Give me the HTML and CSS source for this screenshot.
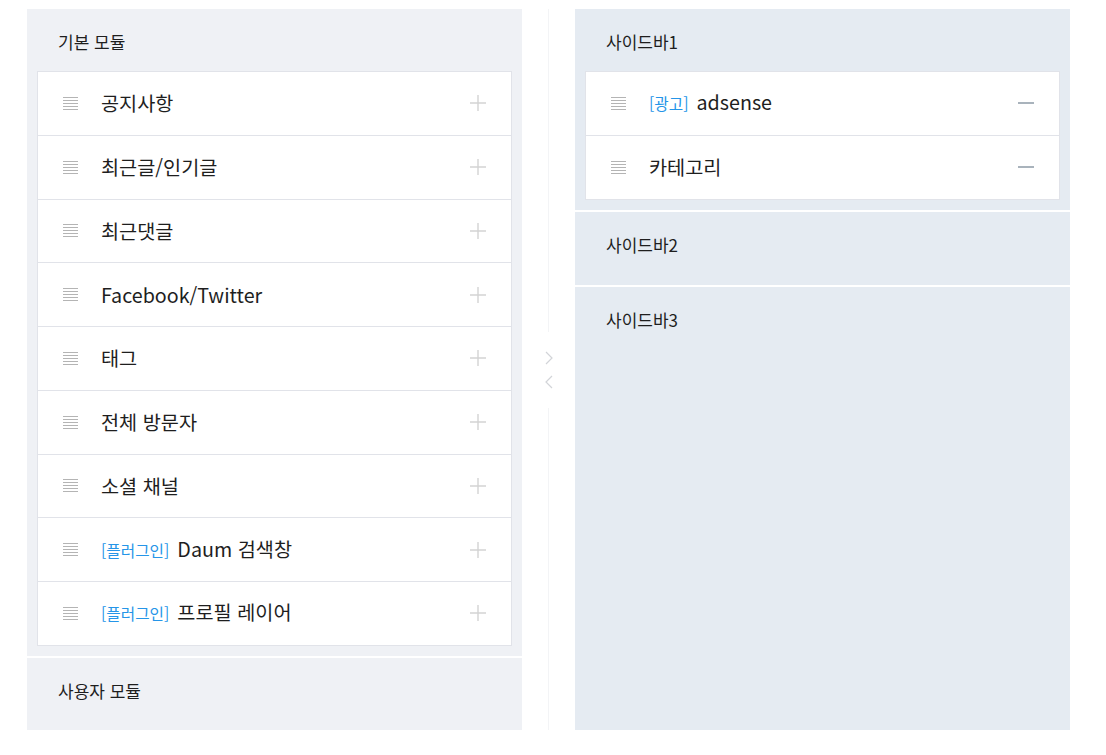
FILE: index.html
```html
<!DOCTYPE html>
<html lang="ko">
<head>
<meta charset="utf-8">
<title>사이드바 관리</title>
<link rel="stylesheet" href="styles.css">
</head>
<body>
<div class="layout">
  <div class="col">
    <section class="group group-left">
      <h2 class="group-title">기본 모듈</h2>
      <ul class="module-list">
        <li class="module"><svg class="drag" viewBox="0 0 15 13"><path d="M0 .5h15M0 3.5h15M0 6.5h15M0 9.5h15M0 12.5h15"/></svg><span class="name">공지사항</span><svg class="act plus" viewBox="0 0 16 16"><path d="M0 8h16M8 0v16"/></svg></li>
        <li class="module"><svg class="drag" viewBox="0 0 15 13"><path d="M0 .5h15M0 3.5h15M0 6.5h15M0 9.5h15M0 12.5h15"/></svg><span class="name">최근글/인기글</span><svg class="act plus" viewBox="0 0 16 16"><path d="M0 8h16M8 0v16"/></svg></li>
        <li class="module"><svg class="drag" viewBox="0 0 15 13"><path d="M0 .5h15M0 3.5h15M0 6.5h15M0 9.5h15M0 12.5h15"/></svg><span class="name">최근댓글</span><svg class="act plus" viewBox="0 0 16 16"><path d="M0 8h16M8 0v16"/></svg></li>
        <li class="module"><svg class="drag" viewBox="0 0 15 13"><path d="M0 .5h15M0 3.5h15M0 6.5h15M0 9.5h15M0 12.5h15"/></svg><span class="name">Facebook/Twitter</span><svg class="act plus" viewBox="0 0 16 16"><path d="M0 8h16M8 0v16"/></svg></li>
        <li class="module"><svg class="drag" viewBox="0 0 15 13"><path d="M0 .5h15M0 3.5h15M0 6.5h15M0 9.5h15M0 12.5h15"/></svg><span class="name">태그</span><svg class="act plus" viewBox="0 0 16 16"><path d="M0 8h16M8 0v16"/></svg></li>
        <li class="module"><svg class="drag" viewBox="0 0 15 13"><path d="M0 .5h15M0 3.5h15M0 6.5h15M0 9.5h15M0 12.5h15"/></svg><span class="name">전체 방문자</span><svg class="act plus" viewBox="0 0 16 16"><path d="M0 8h16M8 0v16"/></svg></li>
        <li class="module"><svg class="drag" viewBox="0 0 15 13"><path d="M0 .5h15M0 3.5h15M0 6.5h15M0 9.5h15M0 12.5h15"/></svg><span class="name">소셜 채널</span><svg class="act plus" viewBox="0 0 16 16"><path d="M0 8h16M8 0v16"/></svg></li>
        <li class="module"><svg class="drag" viewBox="0 0 15 13"><path d="M0 .5h15M0 3.5h15M0 6.5h15M0 9.5h15M0 12.5h15"/></svg><span class="name"><em class="tag">[플러그인]</em>Daum 검색창</span><svg class="act plus" viewBox="0 0 16 16"><path d="M0 8h16M8 0v16"/></svg></li>
        <li class="module"><svg class="drag" viewBox="0 0 15 13"><path d="M0 .5h15M0 3.5h15M0 6.5h15M0 9.5h15M0 12.5h15"/></svg><span class="name"><em class="tag">[플러그인]</em>프로필 레이어</span><svg class="act plus" viewBox="0 0 16 16"><path d="M0 8h16M8 0v16"/></svg></li>
      </ul>
    </section>
    <section class="group group-left">
      <h2 class="group-title">사용자 모듈</h2>
    </section>
  </div>

  <div class="divider">
    <span class="divider-line"></span>
    <div class="divider-arrows">
      <svg class="arrow" viewBox="0 0 8 14"><path d="M1 1l6 6-6 6"/></svg>
      <svg class="arrow" viewBox="0 0 8 14"><path d="M7 1L1 7l6 6"/></svg>
    </div>
    <span class="divider-line"></span>
  </div>

  <div class="col">
    <section class="group group-right">
      <h2 class="group-title">사이드바1</h2>
      <ul class="module-list">
        <li class="module"><svg class="drag" viewBox="0 0 15 13"><path d="M0 .5h15M0 3.5h15M0 6.5h15M0 9.5h15M0 12.5h15"/></svg><span class="name"><em class="tag">[광고]</em>adsense</span><svg class="act minus" viewBox="0 0 16 16"><path d="M0 8h16"/></svg></li>
        <li class="module"><svg class="drag" viewBox="0 0 15 13"><path d="M0 .5h15M0 3.5h15M0 6.5h15M0 9.5h15M0 12.5h15"/></svg><span class="name">카테고리</span><svg class="act minus" viewBox="0 0 16 16"><path d="M0 8h16"/></svg></li>
      </ul>
    </section>
    <section class="group group-right">
      <h2 class="group-title">사이드바2</h2>
    </section>
    <section class="group group-right group-fill">
      <h2 class="group-title">사이드바3</h2>
    </section>
  </div>
</div>
</body>
</html>
```

FILE: styles.css
```css
* { box-sizing: border-box; }

html, body {
  margin: 0;
  padding: 0;
  background: #fff;
}

body {
  font-family: "Noto Sans CJK KR", "Noto Sans", sans-serif;
  color: #222;
}

.layout {
  display: flex;
  align-items: stretch;
  padding: 9px 0 0 27px;
  width: 1106px;
  height: 730px;
}

.col {
  width: 495px;
  display: flex;
  flex-direction: column;
  gap: 2px;
}

.group {
  padding: 0 10px 11px;
}

.group-left { background: #eff1f5; }
.group-right { background: #e5ebf2; }
.group-fill { flex: 1; }

.group-title {
  margin: 0;
  padding: 23px 21px 19px;
  font-size: 17px;
  line-height: 20px;
  font-weight: 400;
  color: #1e1e1e;
}

.module-list {
  list-style: none;
  margin: 0 0 -1px;
  padding: 0;
  background: #fff;
  border: 1px solid #e1e3e9;
}

.module {
  box-sizing: content-box;
  display: flex;
  align-items: center;
  height: 62.75px;
  padding: 0 25px 0 25px;
  border-top: 1px solid #e1e3e9;
}

.module:first-child { border-top: 0; }

.drag {
  width: 15px;
  height: 13px;
  fill: none;
  stroke: #b4b4b4;
  stroke-width: 1;
  flex: none;
}

.name {
  flex: 1;
  margin-left: 23px;
  font-size: 19.7px;
  line-height: 24px;
  color: #1e1e1e;
  white-space: nowrap;
}

.tag {
  font-style: normal;
  font-size: 15.7px;
  color: #2595e8;
  margin-right: 8px;
}

.act {
  width: 16px;
  height: 16px;
  fill: none;
  flex: none;
}

.plus { stroke: #d3d3d3; stroke-width: 1.4; }
.minus { stroke: #8592a0; stroke-width: 1.4; }

.divider {
  width: 53px;
  display: flex;
  flex-direction: column;
  align-items: center;
}

.divider-line {
  flex: 1;
  width: 1px;
  background: #f3f4f6;
}

.divider-arrows {
  height: 76px;
  display: flex;
  flex-direction: column;
  align-items: center;
  justify-content: center;
  gap: 10px;
}

.arrow {
  width: 8px;
  height: 14px;
  fill: none;
  stroke: #d2d4d8;
  stroke-width: 1.2;
}
```
